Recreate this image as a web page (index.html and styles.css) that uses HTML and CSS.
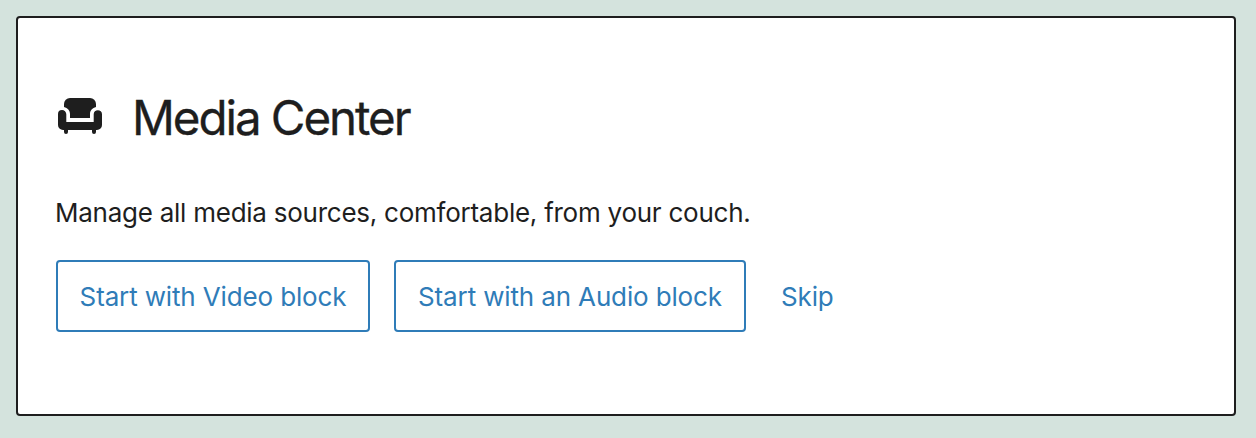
FILE: index.html
```html
<!DOCTYPE html>
<html lang="en">
<head>
<meta charset="utf-8">
<title>Media Center</title>
<link rel="stylesheet" href="styles.css">
</head>
<body>
<main class="placeholder">
  <header class="heading">
    <svg class="icon" viewBox="0 0 44 36" aria-hidden="true">
      <path d="M6 9V6a6 6 0 0 1 6-6h20a6 6 0 0 1 6 6v3c-3.600 .8-6 3.500-6 7v4H12v-4c0-3.500-2.400-6.200-6-7z"/>
      <path d="M4 12a4.300 4.300 0 0 1 4.300 4.300V24h27.400v-7.700a4.150 4.150 0 0 1 8.300 0V27a5 5 0 0 1-5 5h-1v2a2 2 0 0 1-4 0v-2H10v2a2 2 0 0 1-4 0v-2H5a5 5 0 0 1-5-5V16a4 4 0 0 1 4-4z"/>
    </svg>
    <h1 class="title">Media Center</h1>
  </header>
  <p class="description">Manage all media sources, comfortable, from your couch.</p>
  <div class="actions">
    <button class="button video">Start with Video block</button>
    <button class="button audio">Start with an Audio block</button>
    <button class="skip">Skip</button>
  </div>
</main>
</body>
</html>
```

FILE: styles.css
```css
* { box-sizing: border-box; }
body {
  margin: 0;
  padding: 16px 20px 22px 16px;
  background: #d4e3dd;
  color: #1e1e1e;
  font-family: Inter, "Liberation Sans", sans-serif;
}
.placeholder {
  height: 400px;
  padding: 70px 38px 0;
  background: #fff;
  border: 2px solid #1e1e1e;
  border-radius: 4px;
}
.heading { display: flex; align-items: center; height: 60px; padding-left: 2px; }
.icon { width: 44px; height: 36px; margin-right: 30px; margin-top: -4px; fill: #1e1e1e; }
.title {
  margin: 0;
  font-size: 47.5px;
  font-weight: 400;
  line-height: 60px;
  letter-spacing: -2.07px;
  white-space: nowrap;
  -webkit-text-stroke: 0.3px #1e1e1e;
}
.description {
  margin: 50px 0 0 -1px;
  font-size: 26px;
  line-height: 30px;
  letter-spacing: -0.25px;
  white-space: nowrap;
}
.actions { display: flex; margin-top: 32px; }
.button, .skip {
  height: 72px;
  padding: 2px 0 0;
  background: #fff;
  color: #2f7cb8;
  font: 400 26px/30px Inter, "Liberation Sans", sans-serif;
  letter-spacing: -0.14px;
  white-space: nowrap;
}
.button { border: 2px solid #2f7cb8; border-radius: 4px; }
.video { width: 314px; margin-right: 24px; }
.audio { width: 352px; margin-right: 35px; }
.skip { border: 0; }
```
